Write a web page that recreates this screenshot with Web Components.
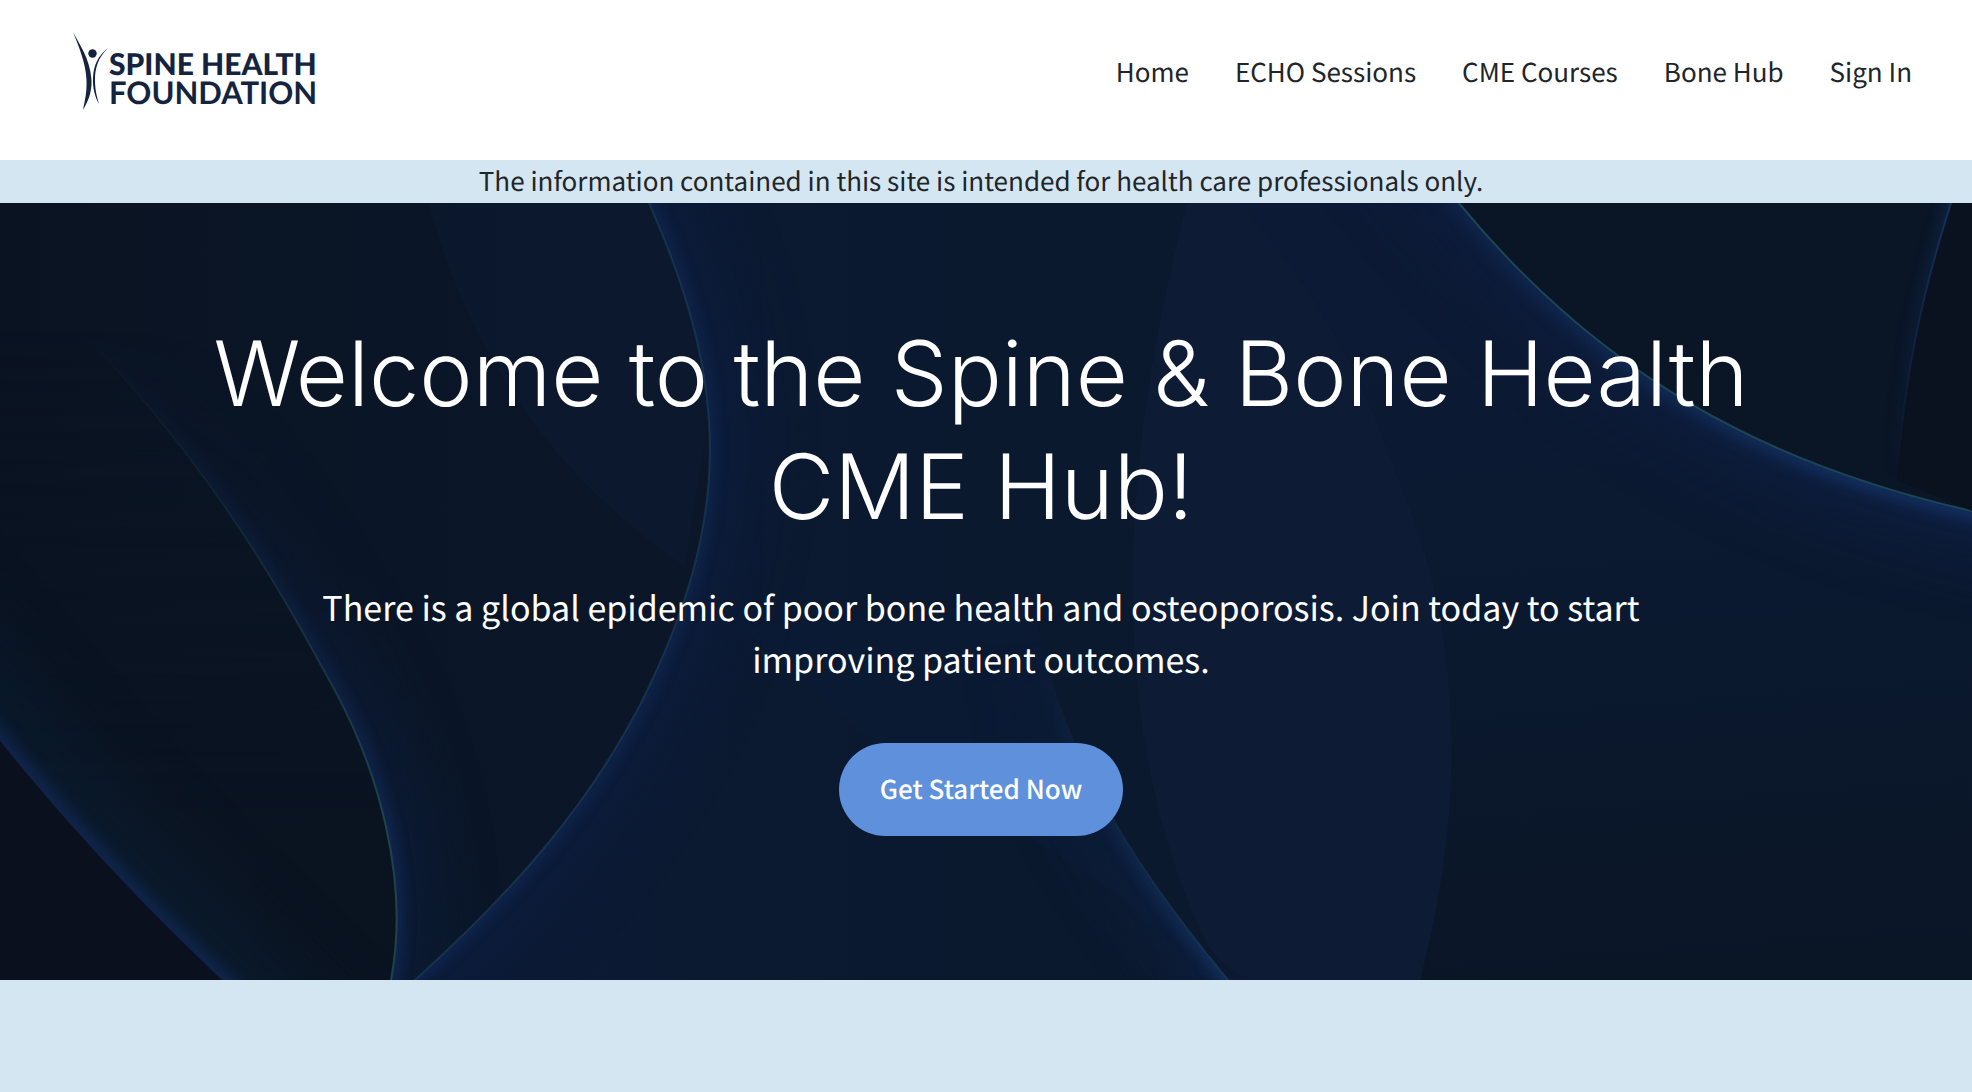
<!DOCTYPE html>
<html lang="en">
<head>
<meta charset="utf-8">
<title>Spine Health Foundation</title>
<style>
html, body { margin: 0; min-height: 100%; }
body {
  background: #d4e6f1;
  color: #212529;
  font-family: "Noto Sans CJK SC", "Noto Sans", sans-serif;
  font-size: 26px;
  text-rendering: geometricPrecision;
}
</style>
</head>
<body>
<site-header>
  <site-logo slot="logo"></site-logo>
  <nav-link href="#home">Home</nav-link>
  <nav-link href="#echo">ECHO Sessions</nav-link>
  <nav-link href="#cme">CME Courses</nav-link>
  <nav-link href="#hub">Bone Hub</nav-link>
  <nav-link href="#signin">Sign In</nav-link>
</site-header>
<notice-bar>The information contained in this site is intended for health care professionals only.</notice-bar>
<hero-banner>
  <span slot="title">Welcome to the Spine &amp; Bone Health CME Hub!</span>
  <span slot="lead">There is a global epidemic of poor bone health and osteoporosis. Join today to start improving patient outcomes.</span>
  <pill-button slot="action">Get Started Now</pill-button>
</hero-banner>

<script>
class Base extends HTMLElement {
  constructor() {
    super();
    this.attachShadow({ mode: 'open' }).innerHTML = this.constructor.markup;
  }
}

customElements.define('site-logo', class extends Base {
  static markup = `
    <style>
      :host { display: block; }
      a { display: flex; color: #14243f; text-decoration: none; }
      svg { display: block; width: 36px; height: 80px; }
      .name { display: flex; flex-direction: column; padding-top: 18px; font: 900 30px/28px Lato, sans-serif; }
      .second { font-weight: 700; font-size: 31px; }
    </style>
    <a href="#home">
      <svg viewBox="0 0 36 80" fill="currentColor" aria-hidden="true">
        <path d="M0 0C6 12 17 26 18.500 48C19 62 14 71 10 78C12 68 14 60 13.500 48C13 32 6 15 0 0Z"/>
        <path d="M35 16C25 26 22 36 22 48C22 58 24 65 26 72C22 65 19.500 56 20 46C20.500 33 25 24 35 16Z"/>
        <circle cx="19.500" cy="21.500" r="4.200"/>
      </svg>
      <span class="name"><span>SPINE HEALTH</span><span class="second">FOUNDATION</span></span>
    </a>`;
});

customElements.define('nav-link', class extends Base {
  static markup = `
    <style>
      :host { display: block; }
      a { color: inherit; text-decoration: none; white-space: nowrap; }
    </style>
    <a><slot></slot></a>`;
  connectedCallback() {
    this.shadowRoot.querySelector('a').href = this.getAttribute('href');
  }
});

customElements.define('site-header', class extends Base {
  static markup = `
    <style>
      :host { display: block; background: #fff; }
      header { display: flex; justify-content: space-between; align-items: flex-start; padding: 32px 60px 48px 73px; }
      nav { display: flex; gap: 46px; line-height: 80px; }
    </style>
    <header><slot name="logo"></slot><nav><slot></slot></nav></header>`;
});

customElements.define('notice-bar', class extends Base {
  static markup = `
    <style>
      :host { display: block; background: #d4e6f1; }
      p { margin: 0; padding: 0 10px 2px 0; text-align: center; line-height: 41px; }
    </style>
    <p><slot></slot></p>`;
});

customElements.define('pill-button', class extends Base {
  static markup = `
    <style>
      :host { display: block; }
      button {
        border: 0; border-radius: 47px; padding: 25px 41px 27px; background: #5e90dc; color: #fff;
        font: 500 26px/41px "Noto Sans CJK SC", "Noto Sans", sans-serif; cursor: pointer; display: block;
        text-rendering: inherit;
      }
    </style>
    <button type="button"><slot></slot></button>`;
});

customElements.define('wave-backdrop', class extends Base {
  static markup = `
    <style>
      :host { display: block; }
      svg { display: block; width: 100%; height: 100%; }
    </style>
    <svg viewBox="0 203 1972 777" preserveAspectRatio="none" fill="none" aria-hidden="true">
      <defs>
        <filter id="soft" color-interpolation-filters="sRGB" filterUnits="userSpaceOnUse" x="-200" y="0" width="2400" height="1200"><feGaussianBlur stdDeviation="32"/></filter>
        <filter id="tight" color-interpolation-filters="sRGB" filterUnits="userSpaceOnUse" x="-200" y="0" width="2400" height="1200"><feGaussianBlur stdDeviation="7"/></filter>
        <linearGradient id="base" x1="0" y1="0" x2="1" y2="0">
          <stop offset="0" stop-color="#0a1322"/><stop offset=".2" stop-color="#0a1627"/><stop offset=".35" stop-color="#0b1729"/>
          <stop offset=".6" stop-color="#0c1a33"/><stop offset="1" stop-color="#0b1730"/>
        </linearGradient>
        <linearGradient id="mid" gradientUnits="userSpaceOnUse" x1="400" y1="0" x2="1459" y2="0">
          <stop offset="0" stop-color="#0c1a35"/><stop offset=".45" stop-color="#0b1930"/><stop offset=".7" stop-color="#0b192e"/><stop offset="1" stop-color="#0c1a34"/>
        </linearGradient>
        <linearGradient id="right" gradientUnits="userSpaceOnUse" x1="1500" y1="203" x2="1560" y2="980">
          <stop offset="0" stop-color="#0c1a36"/><stop offset=".5" stop-color="#0b1930"/><stop offset="1" stop-color="#0a1626"/>
        </linearGradient>
        <linearGradient id="leftpanel" gradientUnits="userSpaceOnUse" x1="0" y1="203" x2="200" y2="980">
          <stop offset="0" stop-color="#0a1423"/><stop offset="1" stop-color="#0a1320"/>
        </linearGradient>
        <linearGradient id="fadeDown" gradientUnits="userSpaceOnUse" x1="0" y1="330" x2="0" y2="820">
          <stop offset="0" stop-color="#fff" stop-opacity="0"/><stop offset="1" stop-color="#fff"/>
        </linearGradient>
        <linearGradient id="fadeLow" gradientUnits="userSpaceOnUse" x1="0" y1="640" x2="0" y2="980">
          <stop offset="0" stop-color="#fff" stop-opacity="0"/><stop offset="1" stop-color="#fff"/>
        </linearGradient>
        <linearGradient id="fadeUp" gradientUnits="userSpaceOnUse" x1="0" y1="203" x2="0" y2="480">
          <stop offset="0" stop-color="#fff"/><stop offset="1" stop-color="#fff" stop-opacity="0"/>
        </linearGradient>
        <linearGradient id="fadeRight" gradientUnits="userSpaceOnUse" x1="1430" y1="0" x2="1850" y2="0">
          <stop offset="0" stop-color="#fff" stop-opacity=".4"/><stop offset="1" stop-color="#fff" stop-opacity=".85"/>
        </linearGradient>
        <mask id="mDown" maskUnits="userSpaceOnUse" x="0" y="203" width="1972" height="777"><rect y="203" width="1972" height="777" fill="url(#fadeDown)"/></mask>
        <mask id="mLow" maskUnits="userSpaceOnUse" x="0" y="203" width="1972" height="777"><rect y="203" width="1972" height="777" fill="url(#fadeLow)"/></mask>
        <mask id="mUp" maskUnits="userSpaceOnUse" x="0" y="203" width="1972" height="777"><rect y="203" width="1972" height="777" fill="url(#fadeUp)"/></mask>
        <mask id="mRight" maskUnits="userSpaceOnUse" x="0" y="203" width="1972" height="777"><rect y="203" width="1972" height="777" fill="url(#fadeRight)"/></mask>

        <path id="a" d="M-150 556L0 741C68 825 132 894 222 980L372 1123"/>
        <path id="b" d="M60 310C210 460 280 590 333 687C378 769 410 880 391 980L372 1080"/>
        <path id="c" d="M604 103L649 203C730 385 733 520 641 703C590 802 520 885 415 980L305 1080"/>
        <path id="d" d="M1377 103L1459 203C1600 375 1765 464 1972 511L2179 558"/>
        <path id="e" d="M1974 133L1951 203C1920 300 1904 380 1897 480"/>
        <path id="g" d="M1034 600C1050 730 1120 850 1228 980L1311 1080"/>

        <clipPath id="cb"><path d="M60 310C210 460 280 590 333 687C378 769 410 880 391 980H1200V203H60Z"/></clipPath>
        <clipPath id="cc"><path d="M649 203C730 385 733 520 641 703C590 802 520 885 415 980H1300V203Z"/></clipPath>
        <clipPath id="ce"><path d="M1951 203C1920 300 1904 380 1897 480V600H1500V203Z"/></clipPath>
        <clipPath id="cg"><path d="M1034 600C1050 730 1120 850 1228 980H700V600Z"/></clipPath>
        <clipPath id="cleft"><path d="M0 203V980H391C410 880 378 769 333 687C280 590 210 460 60 310Z"/></clipPath>
      </defs>

      <rect y="203" width="1972" height="777" fill="url(#base)"/>
      <path d="M428 203C475 370 560 480 685 567L708 420C710 340 680 270 649 203Z" fill="#0b192f" opacity=".7"/>

      <g clip-path="url(#cleft)">
        <rect y="203" width="420" height="777" fill="url(#leftpanel)" mask="url(#mDown)"/>
        <use href="#a" stroke="#0a1c30" stroke-width="120" filter="url(#soft)" opacity=".7"/>
        <use href="#a" stroke="#122854" stroke-width="18" filter="url(#tight)" opacity=".85"/>
      </g>
      <path d="M0 741C68 825 132 894 222 980H0Z" fill="#0a101d"/>

      <g mask="url(#mDown)">
        <g clip-path="url(#cb)">
          <use href="#b" stroke="#0d1d3d" stroke-width="70" filter="url(#soft)" opacity=".8"/>
          <use href="#b" stroke="#132d5c" stroke-width="12" filter="url(#tight)" opacity=".9"/>
        </g>
        <use href="#b" stroke="#21484f" stroke-width="2" opacity=".9"/>
      </g>

      <path d="M649 203C730 385 733 520 641 703C590 802 520 885 415 980H1228L1972 511L1459 203Z" fill="url(#mid)"/>
      <path d="M742 627C790 675 835 705 868 737C930 790 1080 850 1228 980C1120 850 1050 730 1034 600Z" fill="#0d1b36" opacity=".55"/>
      <g clip-path="url(#cc)">
        <use href="#c" stroke="#0d1e40" stroke-width="80" filter="url(#soft)" opacity=".65"/>
        <use href="#c" stroke="#122b59" stroke-width="10" filter="url(#tight)" opacity=".85"/>
      </g>
      <use href="#c" stroke="#1b3f54" stroke-width="2" opacity=".65"/>

      <path d="M1241 203C1350 370 1420 540 1448 690C1456 790 1444 890 1420 980H1972V511C1765 464 1600 375 1459 203Z" fill="url(#right)"/>
      <g mask="url(#mLow)">
        <g clip-path="url(#cg)">
          <use href="#g" stroke="#0e2248" stroke-width="50" filter="url(#soft)" opacity=".8"/>
          <use href="#g" stroke="#16376a" stroke-width="12" filter="url(#tight)" opacity=".9"/>
        </g>
        <use href="#g" stroke="#1b3f54" stroke-width="2" opacity=".7"/>
      </g>
      <path d="M1187 203C1110 500 1115 740 1200 930Q1215 965 1250 980H1420C1470 790 1460 620 1395 470C1350 340 1290 260 1241 203Z" fill="#0d1b35"/>

      <g mask="url(#mRight)">
        <use href="#d" stroke="#0e2045" stroke-width="80" filter="url(#soft)" opacity=".8"/>
        <use href="#d" stroke="#16356c" stroke-width="18" filter="url(#tight)" opacity=".9"/>
      </g>
      <path d="M1459 203C1600 375 1765 464 1972 511V203Z" fill="#0a1526"/>
      <use href="#d" stroke="#21505a" stroke-width="2" opacity=".8"/>
      <path d="M1951 203C1920 300 1904 380 1897 480L1972 511V203Z" fill="#0a1220"/>
      <g mask="url(#mUp)">
        <g clip-path="url(#ce)"><use href="#e" stroke="#122a54" stroke-width="10" filter="url(#tight)" opacity=".8"/></g>
        <use href="#e" stroke="#1a3a68" stroke-width="2" opacity=".8"/>
      </g>
    </svg>`;
});

customElements.define('hero-banner', class extends Base {
  static markup = `
    <style>
      :host { display: grid; color: #fff; background: #0b182b; overflow: hidden; }
      wave-backdrop, section { grid-area: 1 / 1; min-width: 0; }
      wave-backdrop { height: 0; min-height: 100%; }
      section {
        position: relative; display: flex; flex-direction: column; align-items: center;
        padding: 114px 70px 144px 60px; text-align: center;
      }
      h1 { margin: 0 0 38px; max-width: 1640px; font: 300 90px/113px Inter, sans-serif; }
      p { margin: 0 0 58px; max-width: 1380px; font-size: 34px; line-height: 52px; }
    </style>
    <wave-backdrop></wave-backdrop>
    <section>
      <h1><slot name="title"></slot></h1>
      <p><slot name="lead"></slot></p>
      <slot name="action"></slot>
    </section>`;
});
</script>
</body>
</html>
